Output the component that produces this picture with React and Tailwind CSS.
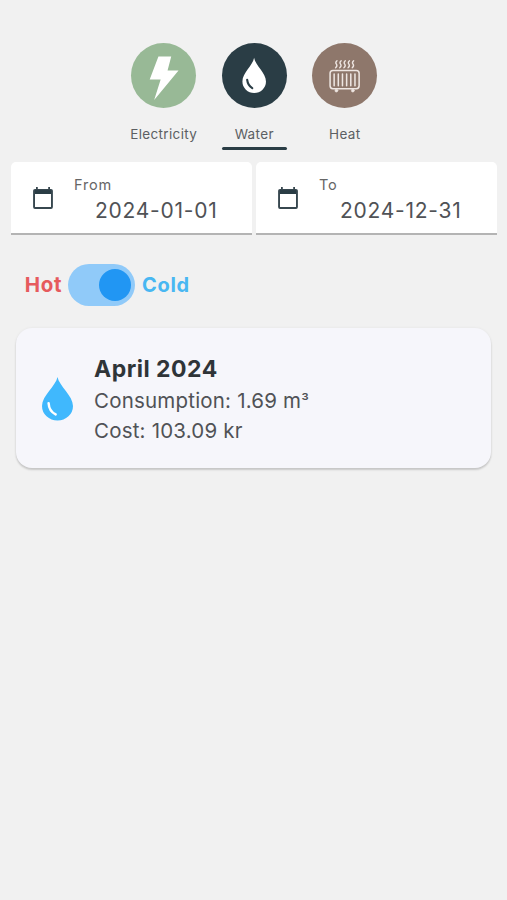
import clsx from "clsx";

const BoltIcon = () => (
  <svg viewBox="0 0 64 64" className="size-full" fill="#fff">
    <path d="M27 13.4H39.6L36 27H46.8L22.8 56L29.2 36H18.4Z" />
  </svg>
);

const WaterIcon = () => (
  <svg viewBox="0 0 64 64" className="size-full">
    <path
      d="M31.6 14.6C32.9 22.2 43.3 29.6 43.3 38A11.6 11.2 0 0 1 20.1 38C20.1 29.6 30.3 22.2 31.6 14.6Z"
      fill="#fff"
    />
    <path
      d="M24.8 36.2Q25.4 41.6 29.8 44.4"
      fill="none"
      stroke="#2a3d45"
      strokeWidth="2.1"
      strokeLinecap="round"
    />
  </svg>
);

const HeatIcon = () => (
  <svg
    viewBox="0 0 64 64"
    className="size-full"
    fill="none"
    stroke="#eee6e2"
    strokeLinecap="round"
  >
    <rect x="17.8" y="27" width="28.6" height="18" rx="2.8" strokeWidth="1.5" />
    {[21.8, 25.9, 30, 34.1, 38.2, 42.3].map((x) => (
      <path key={x} d={`M${x} 30.6V42`} strokeWidth="1.5" />
    ))}
    {[23.8, 27.9, 32, 36.1, 40.2].map((x) => (
      <path
        key={x}
        d={`M${x + 0.8} 17.4q-2 1.7 -.6 3.4t-.8 3.6`}
        strokeWidth="1.3"
      />
    ))}
    <circle cx="24" cy="46.9" r="1.4" fill="#eee6e2" strokeWidth="0.6" />
    <circle cx="40.2" cy="46.9" r="1.4" fill="#eee6e2" strokeWidth="0.6" />
  </svg>
);

const CalendarIcon = () => (
  <svg viewBox="0 0 20 22" className="h-[22px] w-5 shrink-0">
    <path
      d="M2 1.9H18A1.9 1.9 0 0 1 19.9 3.8V20A1.9 1.9 0 0 1 18 21.9H2A1.9 1.9 0 0 1 .1 20V3.8A1.9 1.9 0 0 1 2 1.9ZM2 7V20H18V7Z"
      fill="#37474f"
      fillRule="evenodd"
    />
    <path d="M3 0H4.8V3H3ZM15.2 0H17V3H15.2Z" fill="#37474f" />
    <path d="M2 3.2H18V7H2Z" fill="#2a3d45" />
  </svg>
);

const DropIcon = () => (
  <svg viewBox="0 0 30 44" preserveAspectRatio="none" className="h-11 w-[31px] shrink-0">
    <path
      d="M15 0C16.6 9 30 18.6 30 29A15 14.6 0 0 1 0 29C0 18.6 13.4 9 15 0Z"
      fill="#40b8fd"
    />
    <path
      d="M6.4 26.2Q6.8 34 13.2 37.4"
      fill="none"
      stroke="#fff"
      strokeWidth="2.4"
      strokeLinecap="round"
    />
  </svg>
);

const tabs = [
  { name: "Electricity", color: "bg-[#98b996]", icon: <BoltIcon /> },
  { name: "Water", color: "bg-[#2a3d45]", icon: <WaterIcon />, active: true },
  { name: "Heat", color: "bg-[#8e776b]", icon: <HeatIcon /> },
];

function DateField({ label, value }) {
  return (
    <div className="flex h-[73px] flex-1 items-center rounded-t-[5px] border-b-2 border-[#b4b4b4] bg-white pl-[22px]">
      <CalendarIcon />
      <div className="ml-[21px] flex flex-col pt-[5px]">
        <span className="text-[14.5px] leading-[18px] tracking-[0.8px] text-[#666]">
          {label}
        </span>
        <span className="ml-[21px] mt-1 text-[21px] leading-[26px] tracking-[0.75px] text-[#505256]">
          {value}
        </span>
      </div>
    </div>
  );
}

export default function App() {
  return (
    <div className="h-[900px] w-[507px] overflow-hidden bg-[#f1f1f1] font-['Inter',sans-serif]">
      <div className="flex justify-center pl-[1.5px] pt-[43px]">
        {tabs.map((tab) => (
          <div key={tab.name} className="flex w-[90.5px] flex-col items-center">
            <div className={clsx("size-[65px] rounded-full", tab.color)}>
              {tab.icon}
            </div>
            <span className="mt-[17px] text-[13.5px] leading-[18px] tracking-[0.35px] text-[#5c5f63]">
              {tab.name}
            </span>
            <div
              className={clsx(
                "mt-[3.5px] h-[3.5px] w-[65px] rounded-full",
                tab.active && "bg-[#2a3d45]"
              )}
            />
          </div>
        ))}
      </div>

      <div className="mt-3 flex gap-1 pl-[11px] pr-2.5">
        <DateField label="From" value="2024-01-01" />
        <DateField label="To" value="2024-12-31" />
      </div>

      <div className="mt-[29px] flex items-center pl-6 text-xl font-bold tracking-[0.7px]">
        <span className="w-11 pl-[0.7px] text-[20.5px] text-[#e65a5d]">Hot</span>
        <div className="flex h-[42px] w-[67px] items-center justify-end rounded-full bg-[#90caf9] pr-1">
          <div className="size-8 rounded-full bg-[#2196f3]" />
        </div>
        <span className="ml-[7px] text-[#48b7f2]">Cold</span>
      </div>

      <div className="mx-4 mt-[22px] flex h-[140px] items-center rounded-[16px] bg-[#f6f6fb] pl-[26px] pt-0.5 shadow-[0_2px_2px_rgba(0,0,0,0.16),0_0_3px_rgba(0,0,0,0.06)]">
        <DropIcon />
        <div className="ml-[21px] text-[20.5px] tracking-[0.2px] text-[#505256]">
          <h2 className="text-[23px] font-bold leading-[34px] tracking-[0.5px] text-[#2f3438]">
            April 2024
          </h2>
          <p className="h-[30px] leading-[30px]">
            Consumption: 1.69 m<span className="text-[17px]">³</span>
          </p>
          <p className="h-[30px] leading-[30px]">Cost: 103.09 kr</p>
        </div>
      </div>
    </div>
  );
}
